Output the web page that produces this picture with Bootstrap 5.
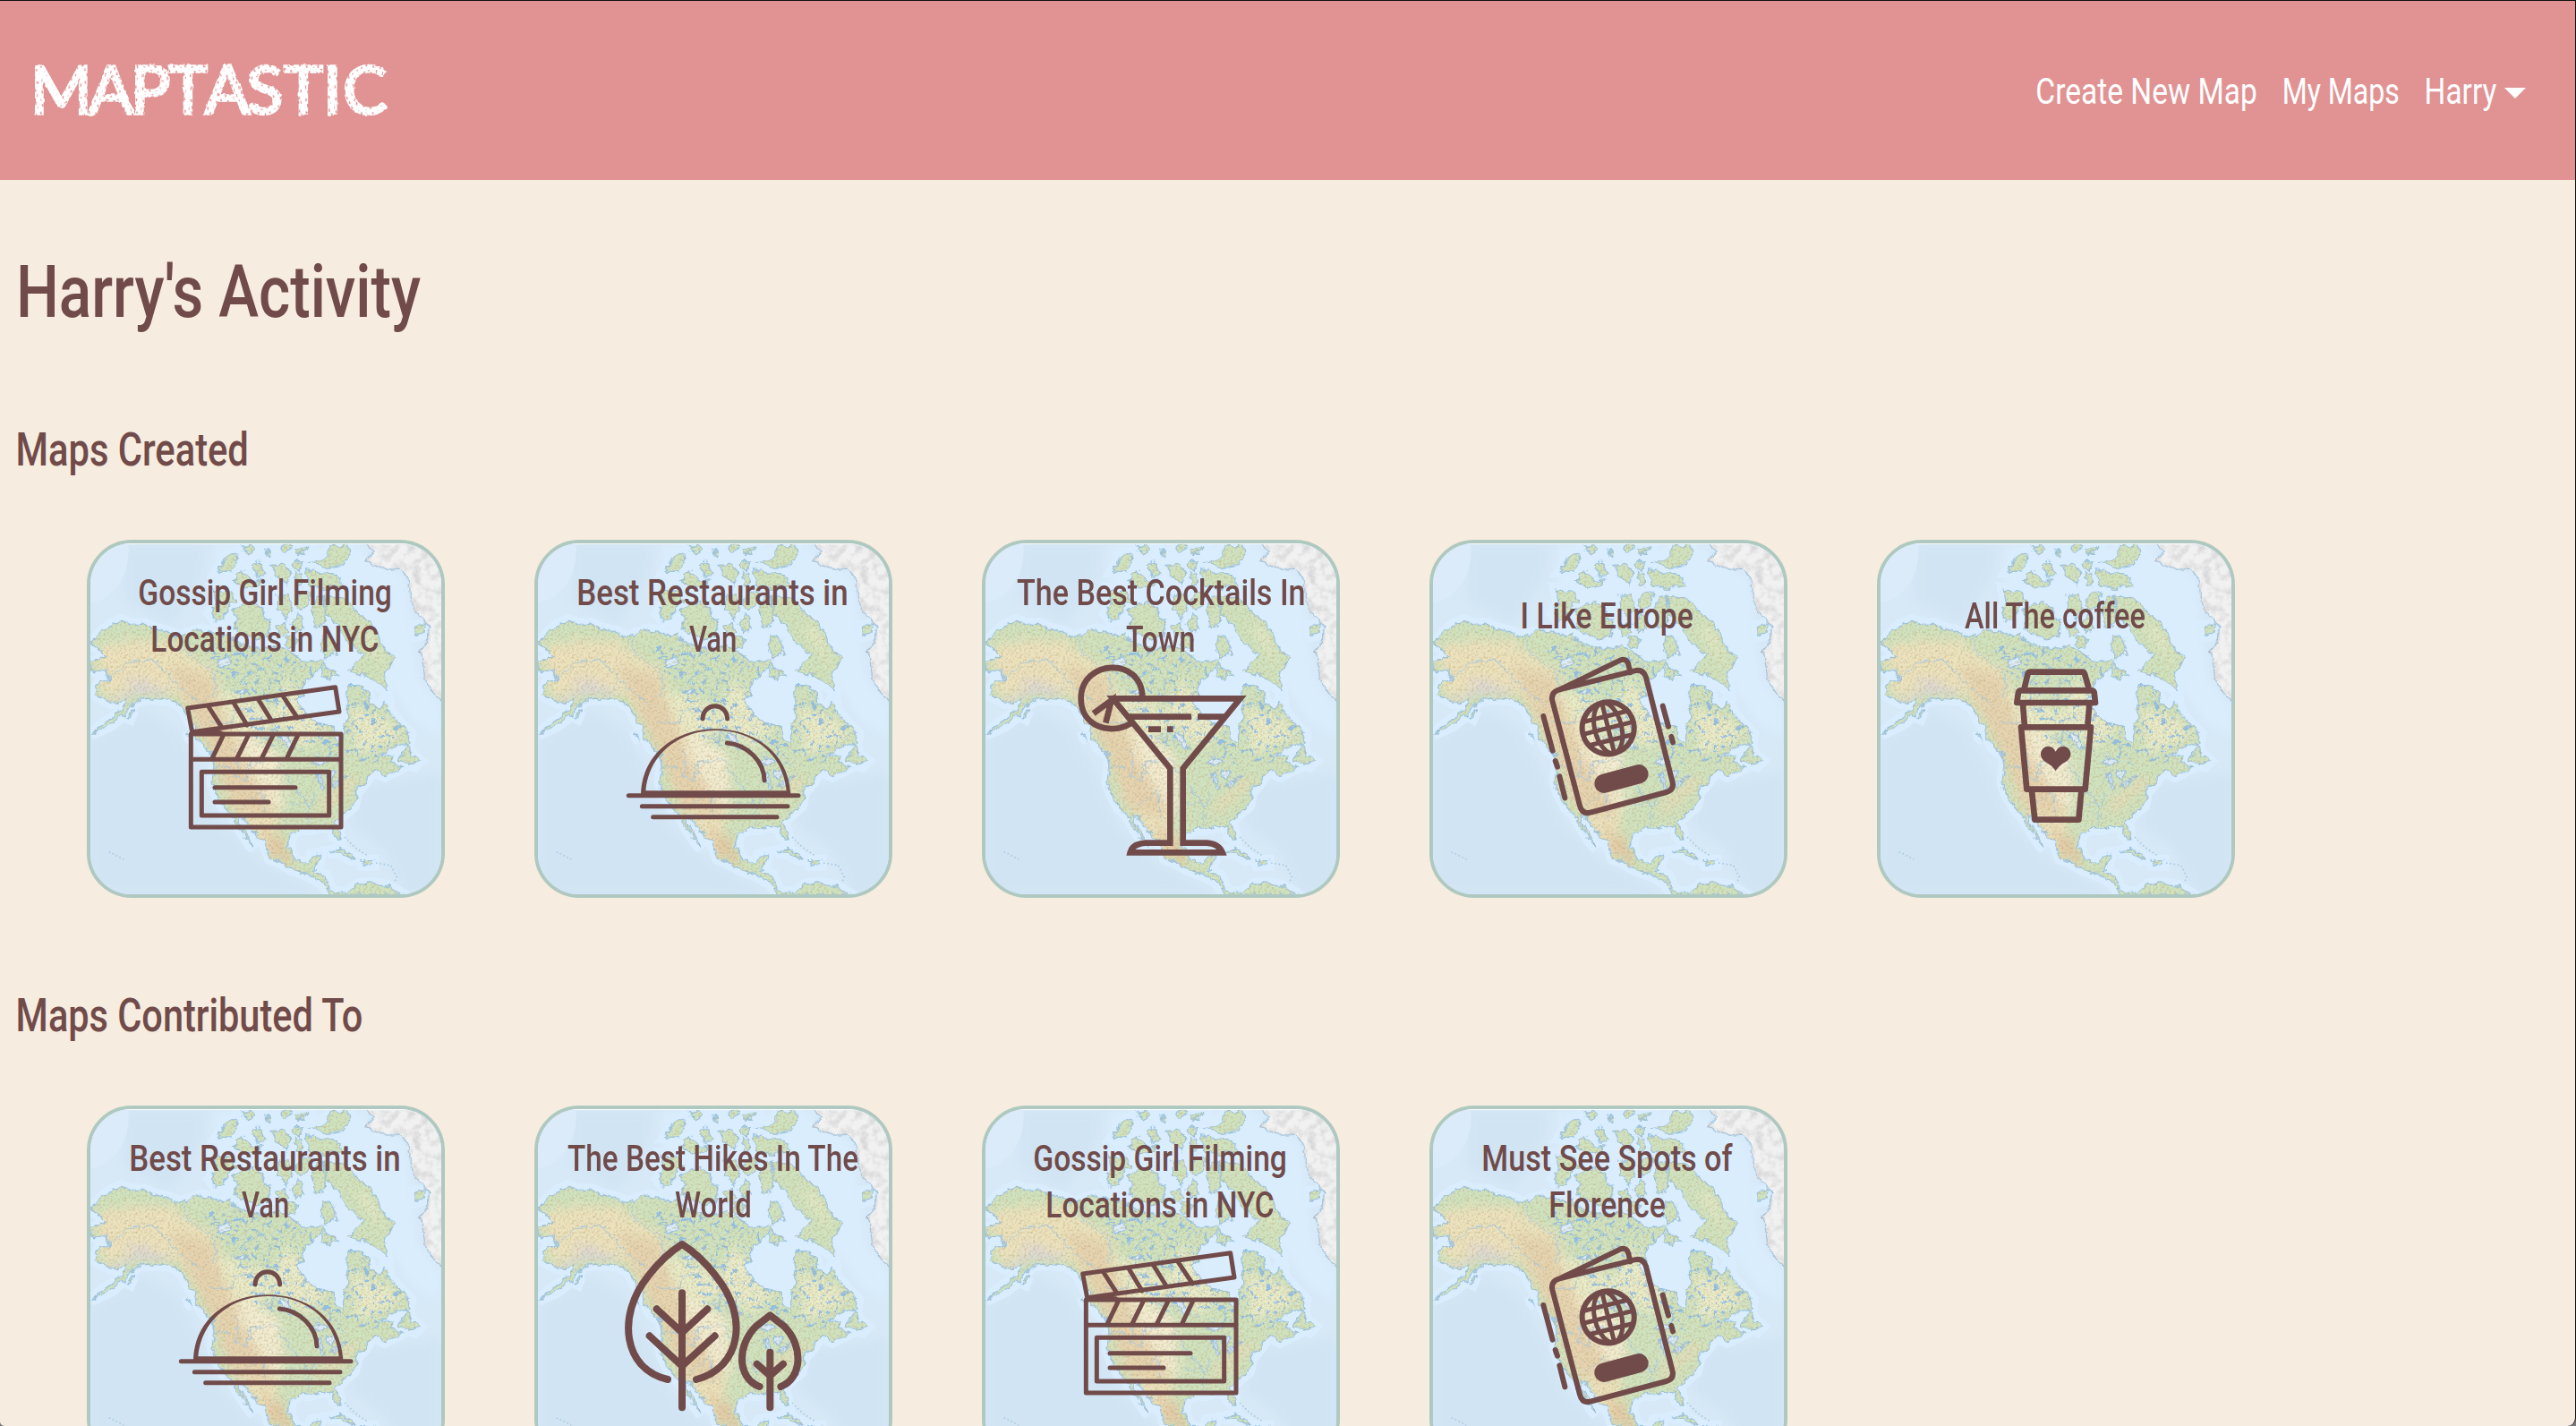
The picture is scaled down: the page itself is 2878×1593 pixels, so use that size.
<!DOCTYPE html>
<html lang="en">
<head>
<meta charset="utf-8">
<title>Maptastic</title>
<link href="https://cdn.jsdelivr.net/npm/bootstrap@5.3.0/dist/css/bootstrap.min.css" rel="stylesheet">
<style>
html,body{height:1593px;overflow:hidden}
html{background:#777}
body{background:#f6ecdf;color:#704b4a;font-family:Roboto,"Liberation Sans",sans-serif;border-top:1px solid #111;border-right:1px solid #111;border-radius:0 0 9px 5px}
.topbar{background:#e19293;height:200px;padding:0 55px 0 38px}
.topbar a{color:#fff;text-decoration:none;font-size:41px;line-height:52px;display:flex;align-items:center}
.menu{gap:31px;margin-top:1px}
.logo{font:400 74px Lato,"Open Sans",sans-serif;fill:#fff;stroke:url(#chalk);stroke-width:3.4px}
.logobox{overflow:visible}
.arrow{border-left:12px solid transparent;border-right:12px solid transparent;border-top:12px solid #fff;margin:5px 0 0 9px}
main{padding:77px 0 0 22px}
h1{font-size:82px;line-height:96px;margin:0;font-weight:500}
h2{font-size:52px;line-height:61px;margin:98px 0 70px -2px;font-weight:500}
section+section h2{margin-top:101px}
.tiles{gap:100px;padding-left:75px}
.tile{width:400px;height:400px;border:4px solid #afc9c0;border-radius:50px;overflow:hidden;position:relative;flex:none;background:#d6e8f6}
.terrain{position:absolute;inset:0;width:392px;height:392px}
.caption{position:relative;font-size:41px;line-height:52px;font-weight:500;margin-right:2px}
.glyph{position:relative;width:392px;height:230px;overflow:visible;fill:none;stroke:#704b4a;stroke-width:15;stroke-linejoin:round;stroke-linecap:round;flex:none}
.fit{display:block;white-space:nowrap}
.fit>span{display:inline-block;transform-origin:0 50%}
.defs{position:absolute;width:0;height:0}
</style>
</head>
<body>
<svg class="defs" aria-hidden="true">
<defs>
<pattern id="chalk" width="8" height="9" patternUnits="userSpaceOnUse" patternTransform="rotate(14)"><rect width="8" height="9" fill="#fff"/><path d="M2 1l1 3M6 5l1 3" stroke="#e19293" stroke-width="1.6"/></pattern>
<filter id="rough" x="-5%" y="-5%" width="110%" height="110%"><feTurbulence type="fractalNoise" baseFrequency=".12" numOctaves="2" seed="4"/><feDisplacementMap in="SourceGraphic" xChannelSelector="R" yChannelSelector="G" scale="3"/></filter>
<filter id="coast" x="0" y="0" width="1300" height="1300" filterUnits="userSpaceOnUse" color-interpolation-filters="sRGB">
<feTurbulence type="fractalNoise" baseFrequency=".035" numOctaves="4" seed="8" result="n"/>
<feDisplacementMap in="SourceGraphic" in2="n" scale="30" xChannelSelector="R" yChannelSelector="G" result="d"/>
<feTurbulence type="fractalNoise" baseFrequency=".13" numOctaves="3" seed="2"/>
<feColorMatrix values="0 0 0 0 .72  0 0 0 0 .66  0 0 0 0 .48  1.4 0 0 0 -.64" result="g"/>
<feComposite in="g" in2="d" operator="in" result="gg"/>
<feMerge><feMergeNode in="d"/><feMergeNode in="gg"/></feMerge></filter>
<filter id="lakes" x="0" y="0" width="1300" height="1300" filterUnits="userSpaceOnUse" color-interpolation-filters="sRGB"><feTurbulence type="fractalNoise" baseFrequency=".065" numOctaves="3" seed="11"/><feColorMatrix values="0 0 0 0 .57  0 0 0 0 .75  0 0 0 0 .91  14 0 0 0 -8.5"/><feComposite in2="SourceGraphic" operator="in"/></filter>
<filter id="ice" x="0" y="0" width="1300" height="1300" filterUnits="userSpaceOnUse" color-interpolation-filters="sRGB"><feTurbulence type="fractalNoise" baseFrequency=".035" numOctaves="4" seed="5" result="n"/><feDisplacementMap in="SourceGraphic" in2="n" scale="22" xChannelSelector="R" yChannelSelector="G" result="d"/><feColorMatrix in="n" values="0 0 0 0 .7  0 0 0 0 .7  0 0 0 0 .72  1 0 0 0 -.42"/><feComposite in2="d" operator="in" result="s"/><feMerge><feMergeNode in="d"/><feMergeNode in="s"/></feMerge></filter>
<filter id="soft" x="-50%" y="-50%" width="200%" height="200%" color-interpolation-filters="sRGB"><feGaussianBlur stdDeviation="16"/></filter>
<path id="shore" d="M66 388L100 350 130 325 165 310 200 322 245 322 270 335 330 350 362 365 395 352 435 340 470 350 500 365 530 355 545 375 600 395 635 405 680 398 730 405 750 430 790 450 840 440 835 470 800 500 775 540 762 580 780 630 830 655 880 665 885 700 905 725 915 690 908 660 930 625 920 590 925 530 960 530 990 545 1005 590 1030 610 1050 575 1070 620 1100 655 1135 690 1130 720 1080 735 1040 755 1010 790 1050 755 1075 760 1060 785 1110 800 1050 830 1010 810 985 850 955 885 945 930 910 960 885 985 895 1010 900 1045 880 1030 872 1000 830 1000 800 1010 770 1005 735 1025 730 1070 750 1115 795 1125 805 1095 835 1090 825 1130 815 1150 850 1165 865 1205 890 1222 930 1220 960 1195 1000 1190 1060 1200 1110 1230 870 1230 840 1190 800 1165 745 1145 700 1120 665 1105 655 1070 630 1040 600 1005 570 965 550 955 575 1010 612 1072 600 1062 565 1010 540 965 510 935 485 890 472 850 480 790 475 760 440 735 420 690 390 640 370 600 330 575 260 570 220 575 180 620 130 660 65 690 110 655 160 620 190 580 130 585 75 555 95 515 125 510 115 480 66 475 70 450 115 435 95 405Z
M855 230L900 235 935 255 960 290 1000 310 1030 360 1040 400 1085 435 1065 470 1045 480 1055 545 1020 520 985 490 930 480 960 450 980 430 940 390 900 345 870 300 850 290Z
M535 275L590 250 640 270 665 320 655 360 620 375 570 350 540 335 560 305Z M475 205L530 215 550 240 515 270 515 300 485 312 465 285 485 250Z M785 140L830 150 900 160 910 190 860 200 800 195Z M800 115L850 100 870 60 925 52 930 80 910 125 850 130Z M490 145L520 100 550 82 555 110 530 145Z M545 155L575 145 600 170 640 175 620 195 575 195 545 185Z M610 120L630 115 645 150 625 165Z M670 125L710 120 735 150 720 190 695 175Z M745 105L775 115 765 140 745 125Z M570 60L600 52 615 75 590 90Z M700 60L730 50 740 70 715 80Z M750 70L790 65 775 85 755 85Z M652 75L665 90 665 100 655 92Z M690 225L725 225 740 280 720 310 695 265Z M760 220L800 215 795 245 775 270 755 255Z M820 230L850 225 850 320 820 335 805 290Z M755 280L780 335 750 350 740 320Z M840 360L880 370 890 425 850 435 835 395Z M845 455L895 495 865 505 838 500Z M750 145L775 155 770 195 750 190Z M690 330L715 320 725 350 700 360Z M720 360L755 370 745 405 720 390Z M1100 780L1125 725 1140 760 1165 780 1150 795Z M862 1085L900 1075 950 1105 935 1110 900 1090Z M970 1115L1010 1115 1010 1127 975 1128Z M1150 330L1185 325 1180 355 1155 360Z M185 630L205 610 195 635Z M390 680L408 712 395 700Z"/>
<clipPath id="land"><use href="#shore"/></clipPath>
<symbol id="world" viewBox="63 51 1176 1176">
<rect x="63" y="51" width="1176" height="1176" fill="#d7e9f7"/>
<path fill="#d1e4f3" filter="url(#soft)" d="M63 710L240 610 360 680 430 820 500 990 640 1120 840 1230H63Z M970 860L1239 820V1227H1120L1050 1080 930 990Z M180 60H450L430 170 330 320 180 240Z"/>
<path fill="#daedfd" filter="url(#soft)" d="M480 60H960L1120 170 1160 500 1239 600V700L1150 650 1060 520 930 510 890 730 770 600 780 480 480 330Z"/>
<path d="M63 51H190Q200 180 100 240L63 250Z" fill="#dbebf9"/>
<use href="#shore" fill="none" stroke="#d9edff" stroke-width="42"/>
<g filter="url(#coast)"><g clip-path="url(#land)">
<rect x="50" y="40" width="1200" height="1200" fill="#d0e3c0"/>
<g filter="url(#soft)">
<path d="M75 400Q200 360 330 380L480 480 520 640 640 720 690 900 690 1040 740 1140 640 1080 520 900 470 740 360 560 240 520 110 570" fill="#ece2be"/>
<path d="M330 460L470 500 530 690 690 860 670 960 550 950 480 780 400 610Z" fill="#e6d3b0"/>
<path d="M560 660L700 760 710 950 660 920 560 750Z" fill="#f2ecd2"/>
<path d="M480 540L620 580 690 670 600 700 520 640Z M930 600L1060 640 1110 700 960 760Z M1000 350L1060 490 940 310Z M720 500L850 680 780 740 660 640Z" fill="#e9ebc9"/>
<path d="M630 1000L710 1050 740 1150 680 1100Z" fill="#e2c8a4"/>
<path d="M190 510L320 550 220 540 110 600" stroke="#ddd6d8" stroke-width="20" fill="none"/>
<path d="M950 840L830 950" stroke="#e8dcb8" stroke-width="26"/>
</g>
<path filter="url(#lakes)" d="M440 380L840 420 1140 620 1130 730 900 800 840 760 620 720 560 560 480 480Z"/>
<g fill="#dcecfb" stroke="#9cc3e4" stroke-width="4"><path d="M490 440L530 435 535 450 500 470Z M545 550L590 540 570 560Z M800 790L825 768 860 785 830 795Z M830 810L845 870 835 870 826 825Z M848 815L880 815 875 845 855 830Z M865 860L900 845 880 865Z M895 835L925 830 905 845Z M700 685L725 690 740 735 720 730Z M885 390L940 400 960 450 900 460 870 430Z"/></g>
<g fill="none" stroke="#a9cbe1" stroke-width="3"><path d="M130 500L190 450 260 435 320 485 350 525 440 590 M460 650L540 655 545 610 610 600 M530 740L560 760 545 830 590 850 600 780 690 780 740 860 780 900 800 960 790 1000 M640 880L570 935 M735 920L800 930 820 890 M640 880L650 970 M480 800L530 800 M620 690L640 710 700 685 M370 370L390 420 480 490 480 560"/></g>
</g>
<use href="#shore" fill="none" stroke="#9fc6e4" stroke-width="4"/></g>
<path filter="url(#ice)" fill="#f1f1f1" stroke="#a9c8df" stroke-width="4" d="M970 40L1010 75 990 110 1060 140 1100 135 1130 180 1140 250 1165 290 1198 330 1195 380 1170 410 1180 450 1190 520 1220 565 1250 575V40Z"/>
<g fill="none" stroke="#a8cbe4" stroke-width="5" stroke-dasharray="5 8"><path d="M915 1035L950 1070 995 1100M1020 1122L1070 1130 1090 1170 1080 1190M125 1085L175 1110"/></g>
<path d="M63 52H1239" stroke="#fff" stroke-width="3"/>
</symbol>
<symbol id="clapper" viewBox="63 450 1176 690" overflow="visible"><path d="M404 683L389 603 884 533 897 615 404 683 500 686M400 690H903V1002H400ZM400 775H903M458 597L503 667M543 585L588 660M625 573L670 645M708 562L757 636M508 695L472 770M592 695L555 770M675 695L638 770M758 695L722 770M436 817H863V963H436ZM480 869H750M480 918H660"/></symbol>
<symbol id="cloche" viewBox="63 450 1176 690" overflow="visible"><path d="M615 639C617 582 696 582 698 639M697 720C766 726 821 782 822 846M367 896H936M412 932H900M449 968H864"/><path fill="#704b4a" stroke="none" fill-rule="evenodd" d="M408 892C418 600 896 600 910 892ZM424 880H896C870 611 450 611 424 880Z"/></symbol>
<symbol id="martini" viewBox="63 450 1176 690" overflow="visible"><g stroke-width="20" stroke-linecap="butt" stroke-linejoin="miter"><path d="M589 568C588 428 383 440 383 570C383 665 480 695 549 655M425 621L485 577 466 653M682 1054V805L490 571H917L725 805V1054M692 1055H600Q555 1058 548 1087H857Q845 1058 805 1055H715M540 632H753M774 632H868M609 674H651M672 674H692"/></g></symbol>
<symbol id="passport" viewBox="63 372 1176 690" overflow="visible"><g stroke-width="18"><path d="M490 540L690 443Q714 432 720 465L724 484M484 542L738 478Q768 471 777 500L865 848Q873 877 845 885L590 953Q563 960 555 930L463 578Q457 551 484 542ZM433 630L464 746M473 780L480 800M487 832L505 904M833 596L852 665M862 699L867 718"/><path d="M636 856L753 824" stroke-width="64"/><g transform="rotate(-14 650 670)"><circle cx="650" cy="670" r="87"/><ellipse cx="650" cy="670" rx="45" ry="86" stroke-width="15"/><path d="M650 585V755M564 670H736M577 630H723M577 711H723" stroke-width="15"/></g></g></symbol>
<symbol id="cup" viewBox="63 372 1176 690" overflow="visible"><g stroke-width="20"><path d="M544 541L557 487Q559 482 565 482H738Q745 482 747 488L762 541M520 585L525 550Q527 544 535 544H769Q777 544 779 550L783 585ZM540 590L546 663M763 590L757 663M534 667H768L749 875H553ZM570 880L580 977H727L736 880"/></g><path fill="#704b4a" stroke="none" d="M650 813Q635 793 615 783C588 766 601 731 625 731Q642 731 650 749Q658 731 675 731C700 731 713 766 684 783Q664 793 650 813Z"/></symbol>
<symbol id="trees" viewBox="63 456 1176 690" overflow="visible"><g stroke-width="24"><path d="M498 963C350 930 325 750 432 617Q485 548 546 510Q607 548 660 617C772 755 742 925 594 963M546 673V1057M461 727L546 806 631 727M437 817L546 918 656 817M806 987C731 960 728 850 794 785L841 748 888 785C954 850 949 960 877 987M841 872V1057M797 911L841 950 885 911"/></g></symbol>
</defs>
</svg>
<header class="topbar d-flex align-items-center justify-content-between">
<a href="#" aria-label="Maptastic"><svg class="logobox" width="420" height="120" viewBox="38 40 420 120"><text class="logo" filter="url(#rough)" y="126" x="34 99 146 188 229 276 317 361 383">MAPTASTIC</text></svg></a>
<nav class="menu d-flex align-items-center">
<a href="#"><span class="fit" data-ink="245"><span>Create New Map</span></span></a>
<a href="#"><span class="fit" data-ink="128"><span>My Maps</span></span></a>
<a href="#"><span class="fit" data-ink="78"><span>Harry</span></span><i class="arrow"></i></a>
</nav>
</header>
<main>
<h1><span class="fit" data-ink="448"><span>Harry's Activity</span></span></h1>
<section><h2><span class="fit" data-ink="256"><span>Maps Created</span></span></h2><div class="tiles d-flex" id="created"></div></section>
<section><h2><span class="fit" data-ink="385"><span>Maps Contributed To</span></span></h2><div class="tiles d-flex" id="contributed"></div></section>
</main>
<script src="https://cdn.jsdelivr.net/npm/bootstrap@5.3.0/dist/js/bootstrap.bundle.min.js"></script>
<script>
// each tile: icon, then caption lines with their drawn widths
const gossip=['clapper',['Gossip Girl Filming',280],['Locations in NYC',253]];
const food=['cloche',['Best Restaurants in',300],['Van',52]];
const maps={created:[gossip,food,['martini',['The Best Cocktails In',321],['Town',76]],['passport',['I Like Europe',190]],['cup',['All The coffee',202]]],
contributed:[food,['trees',['The Best Hikes In The',325],['World',84]],gossip,['passport',['Must See Spots of',279],['Florence',128]]]};
for(const id in maps)document.getElementById(id).innerHTML=maps[id].map(([icon,...lines])=>
`<article class="tile d-flex flex-column justify-content-center align-items-center"><svg class="terrain"><use href="#world"/></svg><div class="caption d-flex flex-column align-items-center">${lines.map(([t,w])=>`<span class="fit" data-ink="${w}"><span>${t}</span></span>`).join('')}</div><svg class="glyph"><use href="#${icon}"/></svg></article>`).join('');
// condense every label to its ink width
const ctx=document.createElement('canvas').getContext('2d');
function fit(){document.querySelectorAll('.fit').forEach(el=>{const s=el.firstElementChild,c=getComputedStyle(s);ctx.font=`${c.fontWeight} ${c.fontSize} ${c.fontFamily}`;const m=ctx.measureText(s.textContent),k=el.dataset.ink/(m.actualBoundingBoxRight+m.actualBoundingBoxLeft);el.style.width=el.dataset.ink+'px';s.style.transform=`translateX(${m.actualBoundingBoxLeft*k}px) scaleX(${k})`;});}
fit();
</script>
</body>
</html>
